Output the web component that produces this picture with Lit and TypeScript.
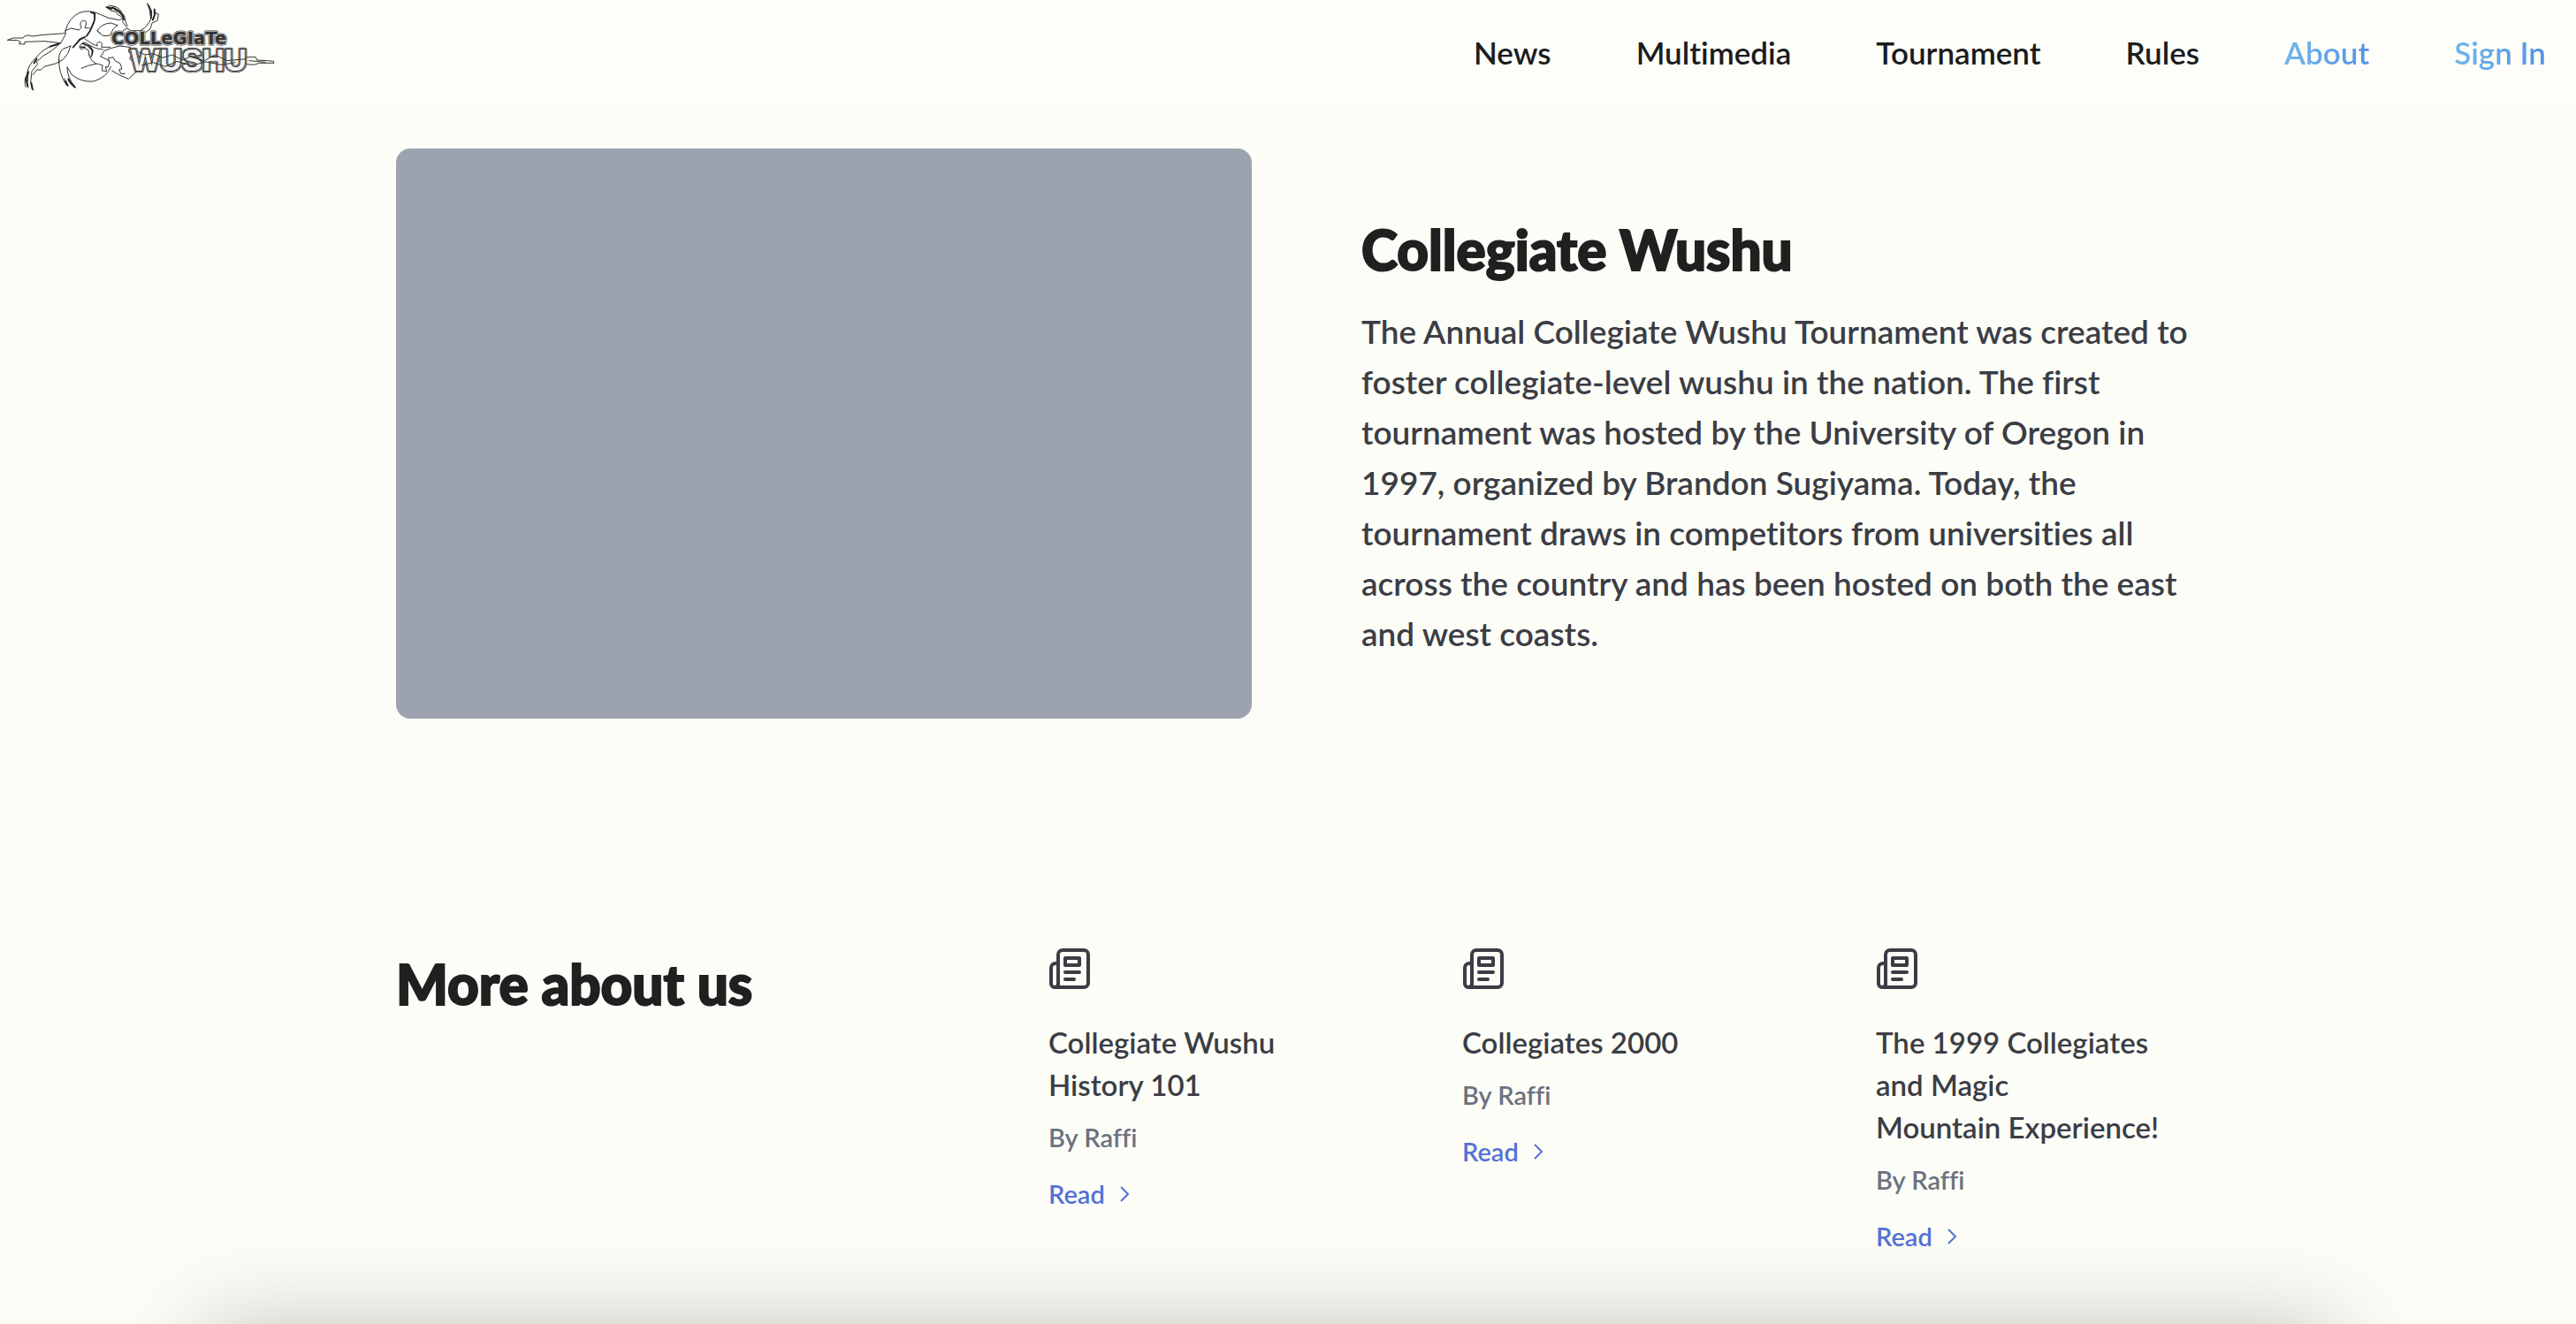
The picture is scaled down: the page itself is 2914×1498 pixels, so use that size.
import { LitElement, html, css, svg } from "lit";
import { customElement } from "lit/decorators.js";

interface NavLink {
  label: string;
  accent?: boolean;
}

interface Article {
  title: string;
  author: string;
}

const NAV: NavLink[] = [
  { label: "News" },
  { label: "Multimedia" },
  { label: "Tournament" },
  { label: "Rules" },
  { label: "About", accent: true },
  { label: "Sign In", accent: true },
];

const ARTICLES: Article[] = [
  { title: "Collegiate Wushu History 101", author: "Raffi" },
  { title: "Collegiates 2000", author: "Raffi" },
  { title: "The 1999 Collegiates and Magic Mountain\u00a0Experience!", author: "Raffi" },
];

const logo = svg`
  <g fill="none" stroke="#333" stroke-width="3" stroke-linejoin="round" stroke-linecap="round">
    <path fill="#fff" stroke="none" d="M222 105 Q232 62 270 43 Q306 31 340 49 L366 60 L404 68 L418 62 Q430 78 432 92 L444 104 L470 112 L470 232 L436 268 L400 250 L374 240 Q350 268 318 276 Q276 280 244 254 L228 228 L230 262 L256 297 L222 292 Q198 258 200 214 Q196 182 214 166 L240 156 L206 146 L222 118 Z"/>
    <path d="M222 105 Q232 62 270 43 Q306 31 340 49 L366 60 L404 68 L418 62 M376 226 Q364 262 318 276 Q276 280 244 254 L228 228 M206 146 L222 118 V105 M200 214 Q196 182 214 166 L240 156"/>
    <!-- spear shaft -->
    <path d="M26 136 L44 129 L78 129 L82 124 L96 119 L108 123 L150 118 L222 113"/>
    <path d="M26 136 L58 137 L70 142 L64 149 L84 150 L84 142 L150 140 L206 146"/>
    <!-- trailing sash -->
    <path d="M206 146 Q150 158 122 196 Q92 224 92 256 Q78 270 88 296 M206 146 L176 172 L146 190 L124 210 L128 218 L108 242 L104 280 L112 306 M240 156 Q236 180 214 202 L188 216 L150 226 L138 238 L126 236 L112 254 M88 262 L96 298 M96 244 L94 276"/>
    <path stroke="#222" stroke-width="6" d="M196 150 L170 158 M124 200 L116 214 M96 244 L88 268 L94 292 M106 282 L110 302"/>
    <!-- head and sleeve -->
    <path d="M222 104 L240 96 L268 102 L276 94 Q268 76 280 70 Q296 68 292 84 L288 94 L304 96 M316 42 Q328 62 312 94 L294 122 L270 132 L248 162"/>
    <path stroke="#222" stroke-width="5" d="M308 42 L322 46 L321 68 L306 104 L294 122 M248 160 L272 134 L288 126"/>
    <path d="M330 104 Q344 80 376 78 L400 86 Q384 92 374 120 L352 122 Z"/>
    <!-- hand, belt and cloth folds -->
    <path d="M270 160 Q274 142 292 146 L306 156 L316 172 L310 194 L302 186 L300 170 L284 162 L278 168 Z M288 132 L312 148 L330 156 Q326 142 340 142 Q350 146 344 160 L374 160 M300 152 L326 164 L350 168"/>
    <path stroke="#222" stroke-width="5" d="M280 148 L300 156 L314 172 L312 186 M274 160 L288 160"/>
    <path d="M342 192 L354 172 L376 164 L406 156 L440 160 L464 180 M342 192 L362 202 L372 210 L366 228 L358 226 L362 242 L346 240 L348 222 L330 216 L302 222 L276 232 M372 210 L366 198 L384 194 L390 206 L408 216 L414 234 L404 236 L410 250 L424 250 M380 240 L408 256 L436 268 L462 244 L470 226"/>
    <path d="M302 188 L312 206 L326 216 M330 104 L340 114 M418 104 L432 96 L444 104 M440 160 L436 176 L446 184 L440 200 L458 214"/>
    <!-- lower sash -->
    <path d="M200 200 Q198 250 226 290 M228 228 Q226 260 256 297 M218 266 L226 280 M236 272 L246 290"/>
    <path stroke="#222" stroke-width="6" d="M222 276 L230 290 M240 282 L254 296 M232 268 L236 278"/>
    <!-- plumes -->
    <path d="M360 24 Q392 24 404 36 Q426 50 426 72 L432 88 M360 24 L376 36 L394 40 L400 50 L412 56 L418 64 L416 74 L430 94 M370 18 L396 24 L414 40"/>
    <path stroke="#222" stroke-width="6" d="M364 24 L378 30 M382 26 L402 38 L416 52 L420 66"/>
    <path d="M500 12 Q516 34 514 58 Q506 88 476 104 L448 104 M524 30 L528 44 L538 48 L534 70 L516 78 L510 98 L494 110 M500 12 L508 34 L510 52 M528 44 L520 68"/>
    <path stroke="#222" stroke-width="5" d="M504 18 L514 40 L512 62 M524 32 L524 52 L518 68"/>
    <!-- spear tip -->
    <path d="M836 194 L868 194 L872 204 L906 206 L928 208 L930 214 L880 214 L862 220 L838 218 M846 206 L900 211"/>
  </g>
  <g class="wordmark" stroke-linejoin="round" paint-order="stroke">
    <g class="upper">
      <text x="378" y="149" stroke="#444" stroke-width="9" fill="#444">COLLeGIaTe</text>
      <text x="378" y="149" stroke="#eee" stroke-width="5" fill="#eee">COLLeGIaTe</text>
      <text x="378" y="149" stroke="#222" stroke-width="1" fill="#333">COLLeGIaTe</text>
    </g>
    <g class="lower">
      <text x="444" y="240" stroke="#333" stroke-width="14" fill="#333">WUSHU</text>
      <text x="444" y="240" stroke="#ccc" stroke-width="9" fill="#ccc">WUSHU</text>
      <text x="444" y="240" stroke="#222" stroke-width="6" fill="#f4f4f2">WUSHU</text>
    </g>
    <path fill="none" stroke="#333" stroke-width="3" d="M470 176 L492 186 L520 182 L552 196 L584 186 L620 204 L650 190 L690 208 L730 186 L770 206 L836 200 M480 222 L520 212 L560 226 L600 208 L650 222 L700 210 L750 220 L800 212"/>
  </g>
`;

@customElement("article-card")
export class ArticleCard extends LitElement {
  static properties = { article: { attribute: false } };
  declare article: Article;

  static styles = css`
    :host {
      display: block;
    }
    .icon {
      display: block;
      width: 48px;
      height: 48px;
      color: #3b3d45;
    }
    .title {
      margin: 34px 0 0;
      max-width: 344px;
      font-size: 33px;
      line-height: 48px;
      font-weight: 600;
      color: #3b3d45;
    }
    .author {
      margin: 16px 0 0;
      font-size: 29px;
      line-height: 40px;
      font-weight: 600;
      color: #6b7280;
    }
    .read {
      display: inline-flex;
      align-items: center;
      gap: 16px;
      margin-top: 24px;
      font-size: 29px;
      line-height: 40px;
      font-weight: 600;
      color: #5472d6;
      text-decoration: none;
    }
    .chevron {
      width: 12px;
      height: 18px;
    }
  `;

  render() {
    return html`
      <svg class="icon" viewBox="0 0 48 48" fill="none" stroke="currentColor" stroke-width="4" stroke-linejoin="round" stroke-linecap="round" aria-hidden="true">
        <path d="M11 40V6a5 5 0 0 1 5-5h24a5 5 0 0 1 5 5v32a5 5 0 0 1-5 5H7" transform="translate(0 1)" />
        <path d="M11 17H8a5 5 0 0 0-5 5v18a4 4 0 0 0 4 4a4 4 0 0 0 4-4" />
        <rect x="19" y="11" width="16" height="8" />
        <path d="M19 27H35M19 35H29" />
      </svg>
      <h3 class="title">${this.article.title}</h3>
      <p class="author">By ${this.article.author}</p>
      <a class="read" href="#read">
        Read
        <svg class="chevron" viewBox="0 0 12 18" fill="none" stroke="currentColor" stroke-width="2" aria-hidden="true">
          <path d="M2 1l8 8-8 8" />
        </svg>
      </a>
    `;
  }
}

@customElement("app-root")
export class AppRoot extends LitElement {
  static styles = css`
    :host {
      display: flex;
      flex-direction: column;
      min-height: 100vh;
      overflow: hidden;
      background: #fcfdf7;
      font-family: Lato, "Open Sans", sans-serif;
      font-variant-ligatures: none;
    }
    .header {
      display: flex;
      justify-content: space-between;
      align-items: center;
      padding-right: 34px;
      background: #fdfef9;
    }
    .brand {
      display: block;
    }
    .logo {
      display: block;
      width: 330px;
      height: 120px;
    }
    .wordmark {
      font-weight: 700;
    }
    .upper {
      font-family: "DejaVu Sans", sans-serif;
      font-size: 59px;
    }
    .lower {
      font-family: "Liberation Sans", sans-serif;
      font-size: 104px;
    }
    .nav {
      display: flex;
      gap: 96px;
      padding-bottom: 2px;
    }
    .link {
      font-size: 35px;
      line-height: 48px;
      font-weight: 600;
      color: #1b1c20;
      text-decoration: none;
    }
    .accent {
      color: transparent;
      background: linear-gradient(to right, #70b7eb, #5492e8);
      background-clip: text;
      -webkit-background-clip: text;
    }
    .content {
      padding: 48px 406px 0 448px;
    }
    .intro {
      display: grid;
      grid-template-columns: 1fr 1fr;
      column-gap: 124px;
    }
    .photo {
      aspect-ratio: 3 / 2;
      border-radius: 16px;
      background: #9ca3af;
    }
    .heading {
      margin: 0;
      font-size: 62px;
      line-height: 72px;
      font-weight: 900;
      color: #202020;
      -webkit-text-stroke: 2px #202020;
    }
    .copy {
      padding-top: 78px;
    }
    .text {
      margin: 28px 0 0;
      font-size: 37px;
      line-height: 57px;
      font-weight: 600;
      color: #3b3d45;
    }
    .more {
      display: grid;
      grid-template-columns: 738fr 1322fr;
      margin-top: 260px;
    }
    .more .heading {
      padding-top: 4px;
    }
    .cards {
      display: grid;
      grid-template-columns: repeat(3, 1fr);
      column-gap: 82px;
    }
    .edge {
      height: 0;
      margin: auto 472px 0 430px;
      box-shadow: 0 207px 100px 200px rgba(0, 0, 0, 0.25);
    }
  `;

  render() {
    return html`
      <header class="header">
        <a class="brand" href="#home" aria-label="Collegiate Wushu">
          <svg class="logo" viewBox="0 0 990 360">${logo}</svg>
        </a>
        <nav class="nav">
          ${NAV.map(
            (item) => html`<a class="link ${item.accent ? "accent" : ""}" href="#">${item.label}</a>`,
          )}
        </nav>
      </header>
      <main class="content">
        <section class="intro">
          <div class="photo"></div>
          <div class="copy">
            <h1 class="heading">Collegiate Wushu</h1>
            <p class="text">
              The Annual Collegiate Wushu Tournament was created to foster collegiate-level wushu in
              the nation. The first tournament was hosted by the University of Oregon in 1997,
              organized by Brandon Sugiyama. Today, the tournament draws in competitors from
              universities all across the country and has been hosted on both the east and west
              coasts.
            </p>
          </div>
        </section>
        <section class="more">
          <h2 class="heading">More about us</h2>
          <div class="cards">
            ${ARTICLES.map((article) => html`<article-card .article=${article}></article-card>`)}
          </div>
        </section>
      </main>
      <div class="edge"></div>
    `;
  }
}
